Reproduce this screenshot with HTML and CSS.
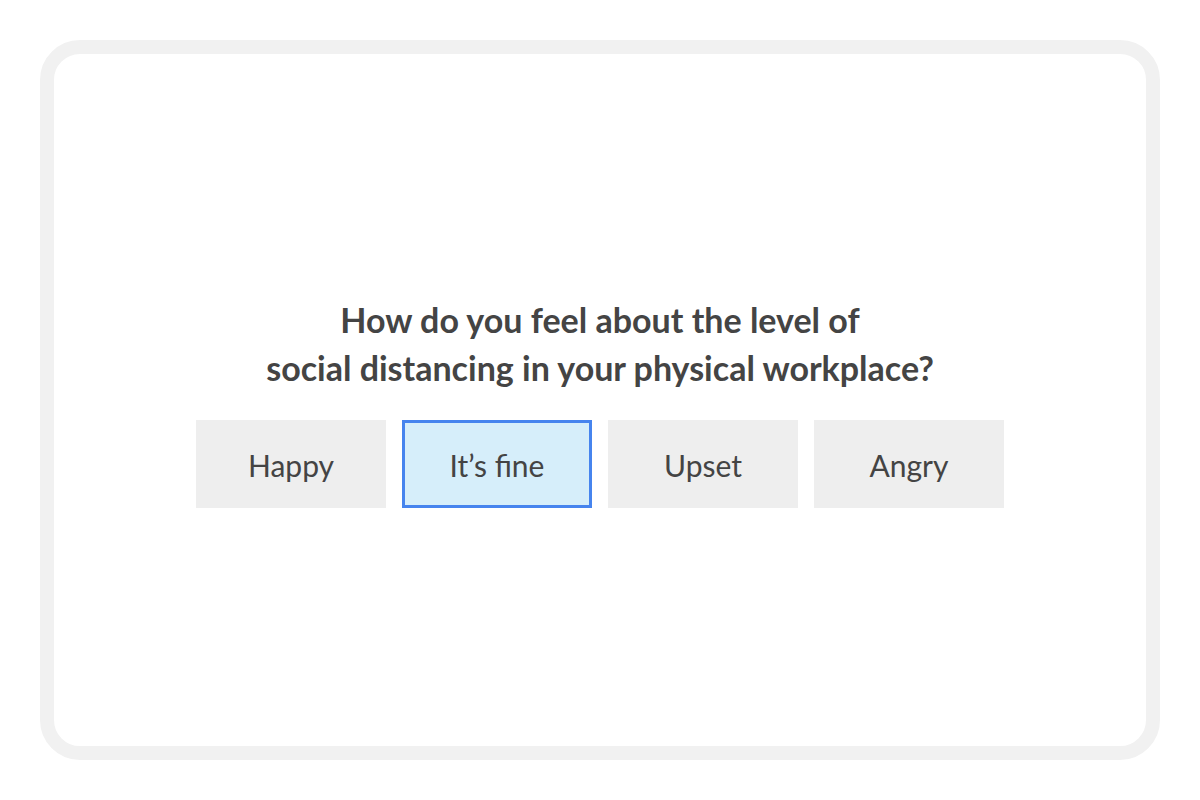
FILE: index.html
```html
<!DOCTYPE html>
<html>
<head>
<meta charset="utf-8">
<link rel="stylesheet" href="styles.css">
</head>
<body>
<div class="frame">
  <div class="content">
    <h1 class="question">How do you feel about the level of<br>social distancing in your physical workplace?</h1>
    <div class="options">
      <div class="option">Happy</div>
      <div class="option selected">It’s fine</div>
      <div class="option">Upset</div>
      <div class="option">Angry</div>
    </div>
  </div>
</div>
</body>
</html>
```
FILE: styles.css
```css
html, body {
  margin: 0;
  padding: 0;
  background: #ffffff;
}
body {
  width: 1200px;
  height: 800px;
  padding: 40px;
  box-sizing: border-box;
  font-family: Lato, "Noto Sans", sans-serif;
}
.frame {
  width: 1120px;
  height: 720px;
  box-sizing: border-box;
  border: 14px solid #f1f1f1;
  border-radius: 40px;
  display: flex;
  align-items: center;
  justify-content: center;
}
.content {
  display: flex;
  flex-direction: column;
  align-items: center;
  margin-top: 4px;
}
.question {
  margin: 0 0 28px 0;
  font-size: 34px;
  line-height: 48px;
  font-weight: 700;
  color: #444444;
  text-align: center;
}
.options {
  display: flex;
  gap: 16px;
}
.option {
  width: 190px;
  height: 88px;
  box-sizing: border-box;
  padding-top: 1px;
  background: #eeeeee;
  display: flex;
  align-items: center;
  justify-content: center;
  font-size: 30px;
  color: #444444;
}
.option.selected {
  background: #d6eefa;
  border: 3px solid #4684ee;
}
```
